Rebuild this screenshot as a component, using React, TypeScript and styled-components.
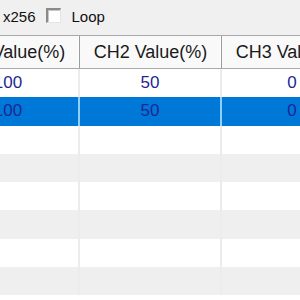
import React from "react";
import styled, { createGlobalStyle } from "styled-components";

const GlobalStyle = createGlobalStyle`
  html, body {
    margin: 0;
    padding: 0;
    background: #f0f0f0;
    font-family: "Liberation Sans", Arial, sans-serif;
    overflow: hidden;
  }
`;

const Page = styled.div`
  width: 300px;
  height: 300px;
  display: flex;
  flex-direction: column;
  overflow: hidden;
`;

const Toolbar = styled.div`
  height: 35px;
  display: flex;
  align-items: center;
  padding-left: 3px;
  font-size: 15px;
  color: #111;
  box-sizing: border-box;
  padding-bottom: 2px;
`;

const Label = styled.span`
  margin-right: 10px;
`;

const CheckBox = styled.span`
  width: 15px;
  height: 15px;
  box-sizing: border-box;
  background: #fff;
  border-top: 2px solid #8a8a8a;
  border-left: 2px solid #8a8a8a;
  border-right: 1px solid #e4e4e4;
  border-bottom: 1px solid #e4e4e4;
  box-shadow: inset 1px 1px 0 #c8c8c8;
  margin-right: 11px;
  margin-top: -3px;
`;

const Grid = styled.div`
  flex: 1;
  overflow: hidden;
  background: #fff;
  border-top: 1px solid #a9a9a9;
`;

/* grid is scrolled horizontally, first column partly hidden */
const Inner = styled.div`
  margin-left: -62px;
  width: 430px;
`;

const HeaderRow = styled.div`
  display: flex;
  height: 32px;
  background: #f9f9f9;
  border-bottom: 1px solid #a9a9a9;
`;

const HeaderCell = styled.div`
  width: 142px;
  flex: none;
  box-sizing: border-box;
  border-right: 1px solid #9c9c9c;
  box-shadow: inset -1px 0 0 #ffffff;
  display: flex;
  align-items: center;
  justify-content: center;
  font-size: 18px;
  color: #1a1a1a;
  padding-top: 1px;
`;

const Row = styled.div<{ $alt: boolean; $selected: boolean }>`
  display: flex;
  height: 28.3px;
  background: ${(p) => (p.$selected ? "#0078d7" : p.$alt ? "#efefef" : "#ffffff")};
`;

const Cell = styled.div<{ $selected: boolean }>`
  width: 142px;
  flex: none;
  box-sizing: border-box;
  border-right: 2px solid ${(p) => (p.$selected ? "#8fd0ff" : "#ececec")};
  display: flex;
  align-items: center;
  justify-content: center;
  font-size: 17px;
  color: #1d2796;
`;

const rows = [
  ["100", "50", "0"],
  ["100", "50", "0"],
  ["", "", ""],
  ["", "", ""],
  ["", "", ""],
  ["", "", ""],
  ["", "", ""],
  ["", "", ""],
];

const App: React.FC = () => {
  return (
    <Page>
      <GlobalStyle />
      <Toolbar>
        <Label>x256</Label>
        <CheckBox />
        <span>Loop</span>
      </Toolbar>
      <Grid>
        <Inner>
          <HeaderRow>
            <HeaderCell>CH1 Value(%)</HeaderCell>
            <HeaderCell>CH2 Value(%)</HeaderCell>
            <HeaderCell>CH3 Value(%)</HeaderCell>
          </HeaderRow>
          {rows.map((r, i) => (
            <Row key={i} $alt={i % 2 === 1} $selected={i === 1}>
              {r.map((v, j) => (
                <Cell key={j} $selected={i === 1}>
                  {v}
                </Cell>
              ))}
            </Row>
          ))}
        </Inner>
      </Grid>
    </Page>
  );
};

export default App;
